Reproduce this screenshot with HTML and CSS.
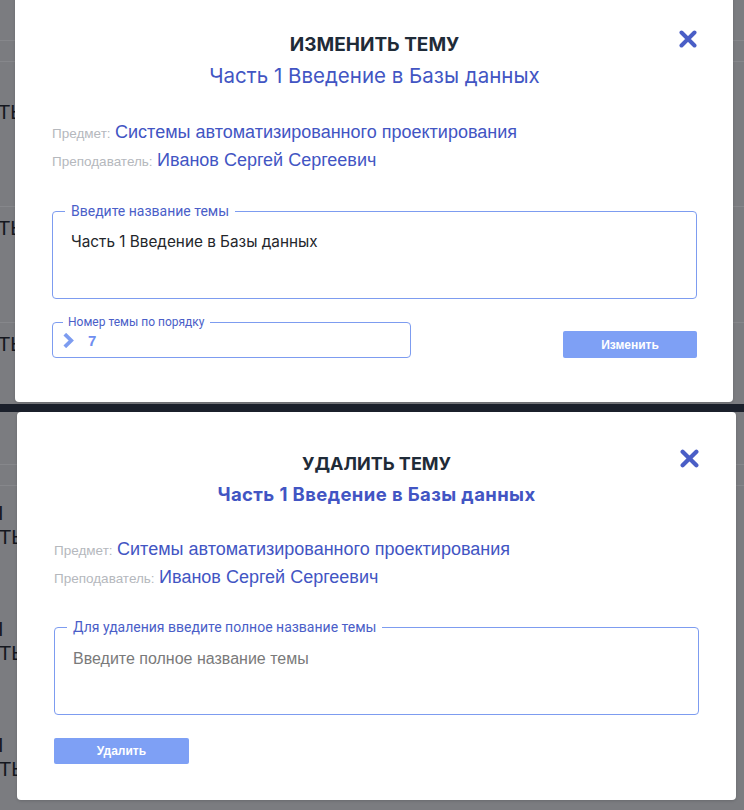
FILE: index.html
```html
<!DOCTYPE html>
<html lang="ru">
<head>
<meta charset="utf-8">
<title>Темы</title>
<link rel="stylesheet" href="styles.css">
</head>
<body>
<section class="screen screen-edit">
  <div class="under">
    <div class="under-line l1"></div>
    <div class="under-line l2"></div>
    <div class="under-word w1">ТЬ</div>
    <div class="under-line l3"></div>
    <div class="under-word w2">ТЬ</div>
    <div class="under-line l3"></div>
    <div class="under-word w2">ТЬ</div>
  </div>
  <div class="modal modal-edit">
    <button class="close" aria-label="Закрыть">
      <svg viewBox="0 0 18 18" width="18" height="18"><path d="M2.5 2.5 L15.5 15.5 M15.5 2.5 L2.5 15.5" stroke="currentColor" stroke-width="4" stroke-linecap="round"/></svg>
    </button>
    <h2 class="title title-edit">ИЗМЕНИТЬ ТЕМУ</h2>
    <p class="subtitle">Часть 1 Введение в Базы данных</p>
    <div class="info">
      <p class="info-row"><span class="info-label">Предмет:</span> <span class="info-value">Системы автоматизированного проектирования</span></p>
      <p class="info-row"><span class="info-label">Преподаватель:</span> <span class="info-value">Иванов Сергей Сергеевич</span></p>
    </div>
    <fieldset class="field field-big">
      <legend>Введите название темы</legend>
      <div class="field-text">Часть 1 Введение в Базы данных</div>
    </fieldset>
    <div class="row">
      <fieldset class="field field-num">
        <legend>Номер темы по порядку</legend>
        <div class="num-line">
          <svg class="chev" viewBox="0 0 11 15" width="11" height="15"><path d="M1.8 1.2 L8.2 7.5 L1.8 13.8" fill="none" stroke="currentColor" stroke-width="3.8" stroke-linejoin="miter"/></svg>
          <span class="num">7</span>
        </div>
      </fieldset>
      <button class="btn">Изменить</button>
    </div>
  </div>
</section>
<div class="divider"></div>
<section class="screen screen-delete">
  <div class="under">
    <div class="under-line l4"></div>
    <div class="under-line l5"></div>
    <div class="under-word w3">I</div>
    <div class="under-word w4">ТЬ</div>
    <div class="under-word w5">I</div>
    <div class="under-word w4">ТЬ</div>
    <div class="under-word w5">I</div>
    <div class="under-word w4">ТЬ</div>
  </div>
  <div class="modal modal-delete">
    <button class="close" aria-label="Закрыть">
      <svg viewBox="0 0 18 18" width="19" height="19"><path d="M2.5 2.5 L15.5 15.5 M15.5 2.5 L2.5 15.5" stroke="currentColor" stroke-width="4" stroke-linecap="round"/></svg>
    </button>
    <h2 class="title">УДАЛИТЬ ТЕМУ</h2>
    <p class="subtitle subtitle-bold">Часть 1 Введение в Базы данных</p>
    <div class="info">
      <p class="info-row"><span class="info-label">Предмет:</span> <span class="info-value">Ситемы автоматизированного проектирования</span></p>
      <p class="info-row"><span class="info-label">Преподаватель:</span> <span class="info-value">Иванов Сергей Сергеевич</span></p>
    </div>
    <fieldset class="field field-big field-del">
      <legend>Для удаления введите полное название темы</legend>
      <div class="field-text placeholder">Введите полное название темы</div>
    </fieldset>
    <button class="btn btn-del">Удалить</button>
  </div>
</section>
</body>
</html>
```
FILE: styles.css
```css
* { box-sizing: border-box; }
html, body { margin: 0; padding: 0; }
body {
  width: 744px;
  height: 810px;
  overflow: hidden;
  background: #7b7c80;
  font-family: "Liberation Sans", Arial, sans-serif;
}
.screen {
  position: relative;
  overflow: hidden;
  background: #7b7c80;
}
.screen-edit { height: 404px; }
.screen-delete { height: 398px; }
.divider { height: 8px; background: #1b202b; }

.under { display: flex; flex-direction: column; align-items: flex-start; }
.under-line { width: 100%; height: 1px; background: #86878b; }
.l1 { margin-top: 40px; }
.l2 { margin-top: 20px; }
.l3 { margin-top: 83px; }
.l4 { margin-top: 52px; }
.l5 { margin-top: 20px; }
.under-word {
  font-family: "Liberation Sans", Arial, sans-serif;
  font-size: 20px;
  line-height: 22px;
  color: #15181f;
  margin-left: -2px;
}
.w1 { margin-top: 39px; }
.w2 { margin-top: 10px; }
.w3 { margin-top: 16px; }
.w4 { margin-top: 2px; margin-left: -1px; }
.w5 { margin-top: 70px; }

.modal {
  position: absolute;
  background: #fff;
  border-radius: 4px;
  display: flex;
  flex-direction: column;
  align-items: stretch;
  box-shadow: 0 1px 3px rgba(0,0,0,0.15);
}
.modal-edit {
  left: 15px;
  top: -10px;
  width: 718px;
  height: 412px;
  padding: 43px 36px 0 37px;
}
.modal-delete {
  left: 17px;
  top: 0;
  width: 719px;
  height: 388px;
  padding: 40px 37px 0 37px;
}
.close {
  position: absolute;
  top: 40px;
  right: 36px;
  border: 0;
  background: none;
  padding: 0;
  color: #4a5ec6;
  display: flex;
}
.modal-delete .close { top: 37px; right: 37px; }

.title {
  margin: 0;
  text-align: center;
  font-family: "Inter", "Roboto", sans-serif;
  font-weight: 700;
  font-size: 18px;
  line-height: 24px;
  color: #1f2b38;
}
.title-edit { font-size: 19px; }
.subtitle {
  margin: 6px 0 0;
  text-align: center;
  font-family: "Inter", "Roboto", sans-serif;
  font-size: 20.5px;
  line-height: 26px;
  color: #4255c3;
}
.subtitle-bold {
  font-weight: 700;
  font-size: 18.5px;
  letter-spacing: 0.4px;
  line-height: 24px;
}
.info { margin-top: 30px; }
.info-row {
  margin: 0;
  line-height: 27px;
  white-space: nowrap;
}
.info-label { font-size: 13.5px; color: #b5b8bd; }
.info-value { font-size: 18px; color: #4255c3; }

.field {
  margin: 0;
  border: 1px solid #7d9cf0;
  border-radius: 4px;
  padding: 0 12px;
}
.field legend {
  padding: 0 6px;
  font-family: "Roboto", sans-serif;
  font-size: 14px;
  line-height: 16px;
  color: #4a5ec8;
}
.field-big { margin-top: 28px; }
.field-text {
  padding: 13px 6px 0;
  height: 79px;
  font-family: "Inter", "Roboto", sans-serif;
  font-size: 15.3px;
  line-height: 20px;
  color: #23262b;
}
.field-del { margin-top: 27px; }
.field-del .field-text { padding-top: 14px; }
.placeholder {
  font-family: "Liberation Sans", Arial, sans-serif;
  font-size: 16px;
  color: #7a7a7a;
}

.row {
  margin-top: 16px;
  display: flex;
  justify-content: space-between;
  align-items: flex-end;
}
.field-num { width: 359px; padding: 0 10px; }
.field-num legend { font-size: 12px; line-height: 14px; padding: 0 5px; }
.num-line {
  height: 28px;
  padding-bottom: 6px;
  display: flex;
  align-items: center;
  gap: 14px;
}
.chev { color: #7d9cf0; display: block; }
.num {
  font-family: "Liberation Sans", Arial, sans-serif;
  font-weight: 700;
  font-size: 15px;
  color: #6f8ef0;
}
.btn {
  width: 134px;
  height: 27px;
  border: 0;
  border-radius: 2px;
  background: #7ea0f5;
  color: #fff;
  font-family: "Liberation Sans", Arial, sans-serif;
  font-weight: 700;
  font-size: 12px;
  padding: 0;
}
.btn-del {
  margin-top: 23px;
  height: 26px;
  width: 135px;
  align-self: flex-start;
}
```
